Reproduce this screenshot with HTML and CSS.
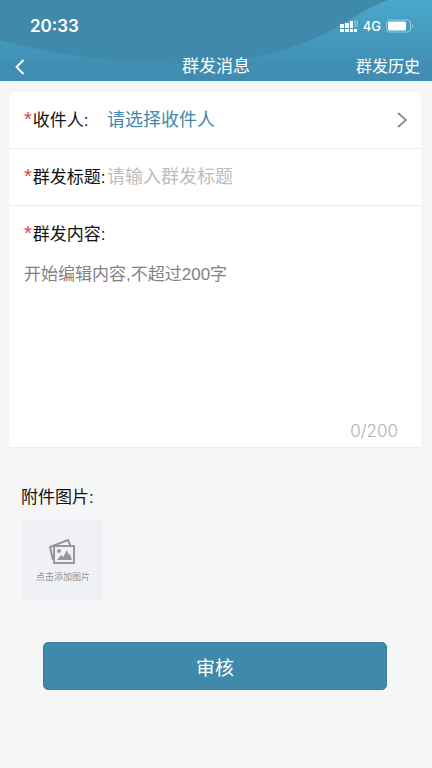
FILE: index.html
```html
<!DOCTYPE html>
<html lang="zh-CN">
<head>
<meta charset="utf-8">
<meta name="viewport" content="width=device-width, initial-scale=1">
<title>群发消息</title>
<link rel="stylesheet" href="styles.css">
</head>
<body>
<header class="header">
  <svg class="header-art" viewBox="0 0 432 81" preserveAspectRatio="none" aria-hidden="true">
    <defs>
      <linearGradient id="wave" x1="0" y1="0" x2="0" y2="1">
        <stop offset="0" stop-color="#4aa8cb"/>
        <stop offset="0.8" stop-color="#408fb3"/>
        <stop offset="1" stop-color="#3f8cb1"/>
      </linearGradient>
    </defs>
    <path fill="url(#wave)" d="M432 0H388C362 10 343 25 322 35C290 50 255 59 216 62C140 66 60 57 0 40V81H432z"/>
  </svg>
  <div class="status">
    <span class="time">20:33</span>
    <div class="indicators">
      <svg width="18" height="14" viewBox="0 0 18 14" fill="#fff" aria-hidden="true">
        <path opacity=".25" d="M14 1h4v7h-4z"/>
        <path d="M0 5h4v4H0zM5 4h4v5H5zM10 2h3v7h-3zM0 10h4v3H0zM5 10h4v3H5zM10 10h3v3h-3zM14 10h3v3h-3z"/>
      </svg>
      <span class="network">4G</span>
      <svg width="28" height="14" viewBox="0 0 28 14" aria-hidden="true">
        <rect x="0.500" y="1" width="24" height="12" rx="3" fill="none" stroke="#fff" stroke-opacity=".45"/>
        <rect x="2" y="2.500" width="18" height="9" rx="1.500" fill="#fff"/>
        <path d="M26 5q2 2 0 4z" fill="#fff" fill-opacity=".6"/>
      </svg>
    </div>
  </div>
  <nav class="nav">
    <button class="back" type="button" aria-label="返回">
      <svg width="10" height="16" viewBox="0 0 10 16" fill="none" stroke="#fff" stroke-width="1.8" aria-hidden="true"><path d="M8.500 1L1.500 8l7 7"/></svg>
    </button>
    <h1 class="title">群发消息</h1>
    <a class="history" href="#">群发历史</a>
  </nav>
</header>
<main class="page">
  <form class="form">
    <section class="card">
      <div class="row">
        <label class="label" for="recipient"><span class="required">*</span>收件人:</label>
        <button class="picker" id="recipient" type="button">
          <span>请选择收件人</span>
          <svg width="12" height="16" viewBox="0 0 12 16" fill="none" stroke="#8b8b8f" stroke-width="1.8" aria-hidden="true"><path d="M2 1l8 7-8 7"/></svg>
        </button>
      </div>
      <div class="row">
        <label class="label" for="subject"><span class="required">*</span>群发标题:</label>
        <input class="subject" id="subject" type="text" placeholder="请输入群发标题">
      </div>
      <div class="content">
        <label class="content-label" for="body"><span class="required">*</span>群发内容:</label>
        <textarea class="body" id="body" maxlength="200" placeholder="开始编辑内容,不超过200字"></textarea>
        <span class="counter">0/200</span>
      </div>
    </section>
    <section class="attachments">
      <h2 class="attachments-title">附件图片:</h2>
      <button class="upload" type="button">
        <svg width="28" height="28" viewBox="0 0 28 28" fill="none" stroke="#96979b" stroke-width="2" aria-hidden="true">
          <path d="M4 22L1 9 19 2l3 7"/>
          <rect x="5" y="8" width="20" height="17"/>
          <circle cx="10" cy="13" r="2" fill="#96979b" stroke="none"/>
          <path d="M8 22l4-5 2 2 4-7 2 5 1-1 2 6z" fill="#96979b" stroke="none"/>
        </svg>
        <span>点击添加图片</span>
      </button>
    </section>
    <button class="submit" type="submit">审核</button>
  </form>
</main>
</body>
</html>
```
FILE: styles.css
```css
* {
  box-sizing: border-box;
}

body {
  margin: 0;
  min-height: 100vh;
  background: #f6f6f6;
  color: #111;
  font-family: "Liberation Sans", "Noto Sans CJK SC", sans-serif;
  font-size: 17px;
}

button,
input,
textarea {
  margin: 0;
  padding: 0;
  border: 0;
  background: none;
  color: inherit;
  font: inherit;
}

svg {
  display: block;
  flex: none;
}

.header {
  position: relative;
  background: #3f8aaa;
  color: #fff;
}

.header-art {
  position: absolute;
  inset: 0;
  width: 100%;
  height: 100%;
}

.status,
.nav {
  position: relative;
}

.status {
  display: flex;
  align-items: center;
  justify-content: space-between;
  height: 52px;
  padding: 0 18px 0 30px;
  font-family: Inter, sans-serif;
}

.time {
  font-size: 17px;
  font-weight: 600;
}

.indicators {
  display: flex;
  align-items: center;
  gap: 5px;
}

.network {
  font-size: 13px;
  font-weight: 500;
}

.nav {
  display: grid;
  grid-template-columns: 1fr auto 1fr;
  align-items: center;
  height: 29px;
  padding: 0 12px;
}

.back {
  justify-self: start;
  padding: 0 3px;
}

.title {
  margin: 0;
  font-size: 17px;
  font-weight: 400;
  line-height: 24px;
}

.history {
  justify-self: end;
  color: inherit;
  font-size: 16px;
  line-height: 24px;
  text-decoration: none;
}

.page {
  padding: 11px 11px 24px 9px;
}

.card {
  border-bottom: 1px solid #eee;
  border-radius: 6px 6px 0 0;
  background: #fff;
}

.row {
  display: flex;
  align-items: baseline;
  height: 57px;
  padding: 14px 13px 0 15px;
  border-bottom: 1px solid #ebebeb;
}

.label {
  flex: none;
  min-width: 83px;
  line-height: 24px;
}

.required {
  margin-right: 1px;
  color: #e2403c;
  font-size: 20px;
  line-height: 1;
}

.picker {
  display: flex;
  flex: 1;
  align-items: center;
  justify-content: space-between;
  color: #3f8aaa;
  font-size: 18px;
  line-height: 28px;
  text-align: left;
}

.subject {
  flex: 1;
  min-width: 0;
  height: 28px;
  font-size: 18px;
}

.subject::placeholder {
  color: #bdbdbf;
  opacity: 1;
}

.content {
  display: flex;
  flex-direction: column;
  padding: 17px 15px 4px;
}

.content-label {
  line-height: 24px;
}

.body {
  height: 156px;
  margin-top: 16px;
  line-height: 24px;
  outline: 0;
  resize: none;
}

.body::placeholder {
  color: #828282;
  opacity: 1;
}

.counter {
  align-self: flex-end;
  padding-right: 8px;
  color: #b0b0b0;
  font-family: Inter, sans-serif;
  font-weight: 300;
  line-height: 24px;
}

.attachments {
  padding: 38px 12px 0;
}

.attachments-title {
  margin: 0 0 10px;
  font-size: 17px;
  font-weight: 400;
  line-height: 24px;
}

.upload {
  display: flex;
  flex-direction: column;
  align-items: center;
  justify-content: center;
  gap: 4px;
  width: 80px;
  height: 80px;
  margin-left: 2px;
  background: #f0f1f6;
  color: #919296;
  font-size: 9px;
}

.submit {
  display: block;
  width: calc(100% - 68px);
  height: 48px;
  margin: 42px auto 0;
  border: 1px solid #397f9e;
  border-radius: 5px;
  background: #3f8aaa;
  color: #fff;
  font-size: 19px;
}
```
